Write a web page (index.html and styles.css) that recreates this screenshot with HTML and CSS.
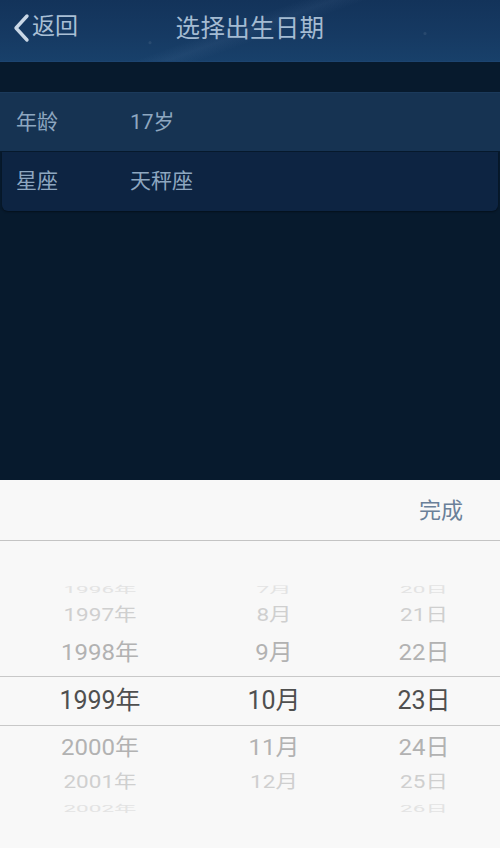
FILE: index.html
```html
<!DOCTYPE html>
<html lang="zh-CN">
<head>
    <meta charset="UTF-8">
    <meta name="viewport" content="width=device-width, initial-scale=1.0">
    <title>选择出生日期</title>
    <link rel="stylesheet" href="styles.css">
</head>
<body>

    <div class="page">
        <header class="topbar">
            <a class="back" href="#">
                <svg class="back-icon" width="20" height="30" viewBox="0 0 20 30">
                    <path d="M16 3 L5 15 L16 27" fill="none" stroke="#c9d7e6" stroke-width="3.4" stroke-linecap="round" stroke-linejoin="round"/>
                </svg>
                <span>返回</span>
            </a>
            <h1 class="title">选择出生日期</h1>
        </header>

        <div class="info">
            <div class="info-row first">
                <span class="label">年龄</span>
                <span class="value">17岁</span>
            </div>
            <div class="info-row second">
                <span class="label">星座</span>
                <span class="value">天秤座</span>
            </div>
        </div>

        <div class="spacer"></div>

        <div class="sheet">
            <div class="sheet-bar">
                <button class="done">完成</button>
            </div>
            <div class="wheel">
                <div class="wheel-row far2"><span>1996年</span><span>7月</span><span>20日</span></div>
                <div class="wheel-row far1"><span>1997年</span><span>8月</span><span>21日</span></div>
                <div class="wheel-row near"><span>1998年</span><span>9月</span><span>22日</span></div>
                <div class="wheel-row current"><span>1999年</span><span>10月</span><span>23日</span></div>
                <div class="wheel-row near"><span>2000年</span><span>11月</span><span>24日</span></div>
                <div class="wheel-row far1 low"><span>2001年</span><span>12月</span><span>25日</span></div>
                <div class="wheel-row far2 low"><span>2002年</span><span></span><span>26日</span></div>
            </div>
        </div>
    </div>

</body>
</html>
```

FILE: styles.css
```css
* { box-sizing: border-box; }

body {
    margin: 0;
    background: #071a2d;
    font-family: Roboto, "Noto Sans CJK SC", sans-serif;
}

.page {
    width: 500px;
    height: 848px;
    display: flex;
    flex-direction: column;
    overflow: hidden;
}

/* top bar with the starry blue background */
.topbar {
    position: relative;
    height: 62px;
    display: flex;
    align-items: center;
    justify-content: center;
    padding-bottom: 8px;
    background:
        radial-gradient(circle at 62% 30%, rgba(255,255,255,0.10) 0 1px, transparent 2px),
        radial-gradient(circle at 30% 70%, rgba(255,255,255,0.08) 0 1px, transparent 2px),
        radial-gradient(circle at 85% 55%, rgba(255,255,255,0.08) 0 1px, transparent 2px),
        linear-gradient(160deg, transparent 45%, rgba(160,190,230,0.06) 50%, transparent 55%),
        linear-gradient(180deg, #13335a 0%, #163a63 60%, #18406a 100%);
    border-bottom: 1px solid #1c4470;
}

.back {
    position: absolute;
    left: 11px;
    top: 12px;
    display: flex;
    align-items: center;
    color: #a9bfd5;
    text-decoration: none;
    font-size: 23px;
    line-height: 30px;
}

.back-icon { display: block; margin-top: 1px; }

.back span { margin-top: -1px; margin-left: 1px; }

.title {
    margin: 0;
    font-size: 24.5px;
    font-weight: normal;
    color: #a4bbd2;
    letter-spacing: 0.3px;
}

.info {
    margin-top: 30px;
}

.info-row {
    height: 59px;
    display: flex;
    align-items: center;
    padding-left: 16px;
    padding-bottom: 5px;
    font-size: 21px;
    color: #8ea7c0;
}

.info-row.first {
    background: #163352;
    border-top: 1px solid #1b3a5b;
}

.info-row.second {
    margin: 1px 2px 0;
    padding-left: 14px;
    background: #0d2442;
    border-radius: 0 0 6px 6px;
    box-shadow: 0 1px 2px rgba(0,0,0,0.4);
}

.label { width: 114px; }

.spacer { flex: 1; }

/* date picker sheet */
.sheet {
    height: 368px;
    background: #f8f8f8;
}

.sheet-bar {
    height: 61px;
    display: flex;
    justify-content: flex-end;
    align-items: center;
    padding-right: 37px;
    padding-bottom: 4px;
    border-bottom: 1px solid #c4c4c4;
}

.done {
    border: none;
    background: none;
    padding: 0;
    font-family: "Noto Sans CJK SC", sans-serif;
    font-size: 22px;
    color: #6a8099;
}

.wheel {
    padding-top: 35px;
}

.wheel-row {
    display: grid;
    grid-template-columns: 200px 148px 152px;
    align-items: center;
    text-align: center;
    font-size: 25px;
    line-height: 30px;
}

.wheel-row span { display: block; margin-top: -1px; }

.wheel-row.far2 { height: 24px; color: #e3e3e3; }
.wheel-row.far2 span { transform: scale(0.9, 0.35); }
.wheel-row.far2.low span { margin-top: -3px; }

.wheel-row.far1 { height: 31px; color: #cfcfcf; }
.wheel-row.far1 span { transform: scale(0.9, 0.72); }
.wheel-row.far1.low { height: 26px; }
.wheel-row.far1.low span { margin-top: -4px; }

.wheel-row.near { height: 45px; color: #b2b2b2; }
.wheel-row.near span { transform: scale(0.96, 0.9); }

.wheel-row.current {
    height: 50px;
    color: #4f4f4f;
    border-top: 1px solid #c8c8c8;
    border-bottom: 1px solid #c8c8c8;
}
```
